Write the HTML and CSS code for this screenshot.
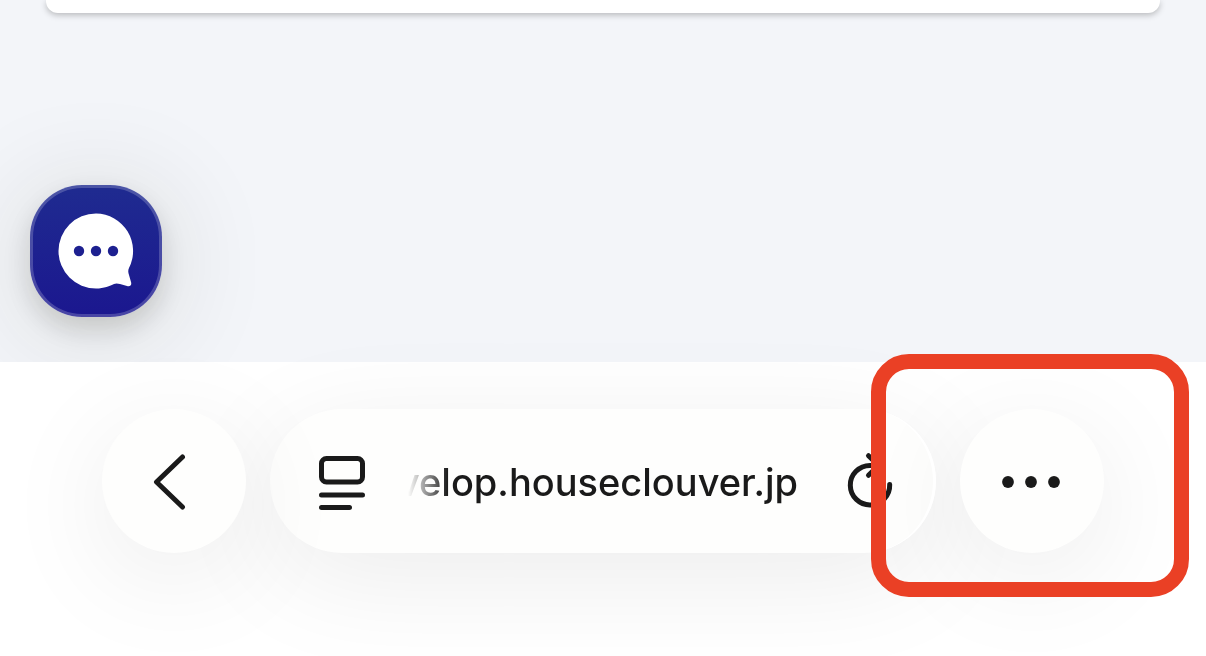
FILE: index.html
```html
<!DOCTYPE html>
<html lang="ja">
<head>
<meta charset="UTF-8">
<meta name="viewport" content="width=device-width, initial-scale=1.0">
<title>develop.houseclouver.jp</title>
<link rel="stylesheet" href="styles.css">
</head>
<body>
<main class="page">
    <div class="card"></div>
    <button class="chat-btn" type="button" aria-label="Chat">
        <svg width="76" height="76" viewBox="0 0 76 76">
            <path fill="#fff" d="M38 0.500A37.500 37.500 0 1 0 38 75.500C46 75.500 52 73 56 71C58 70 60 70.500 62 71L69 73C72 74 74 72 73 69L71 62C70 59 70 57 71 55A37.500 37.500 0 0 0 38 0.500Z"/>
            <circle cx="21" cy="38" r="5.200" fill="#1d2090"/>
            <circle cx="38" cy="38" r="5.200" fill="#1d2090"/>
            <circle cx="55" cy="38" r="5.200" fill="#1d2090"/>
        </svg>
    </button>
</main>
<nav class="toolbar">
    <button class="round-btn" type="button" aria-label="Back">
        <svg width="144" height="144" viewBox="0 0 144 144">
            <path class="stroke" d="M80.500 48L54.500 73L80.500 98"/>
        </svg>
    </button>
    <div class="address-bar">
        <button class="icon-btn" type="button" aria-label="Page menu">
            <svg width="48" height="56" viewBox="0 0 48 56">
                <rect class="stroke" x="3.500" y="3.500" width="41" height="23.500" rx="5"/>
                <path class="stroke" d="M3.500 40H44.500M3.500 52.500H31.500"/>
            </svg>
        </button>
        <button class="address" type="button"><span>develop.houseclouver.jp</span></button>
        <button class="icon-btn" type="button" aria-label="Reload">
            <svg width="48" height="56" viewBox="0 0 48 56">
                <path class="stroke" d="M22.500 0.700L32.500 10.500L22.500 20.300M29 10.500H24A19.700 19.700 0 1 0 43.700 29.500"/>
            </svg>
        </button>
    </div>
    <div class="more">
        <button class="round-btn" type="button" aria-label="More">
            <svg width="144" height="144" viewBox="0 0 144 144">
                <circle cx="48" cy="73" r="5.900" fill="#1a1a1a"/>
                <circle cx="71" cy="73" r="5.900" fill="#1a1a1a"/>
                <circle cx="94" cy="73" r="5.900" fill="#1a1a1a"/>
            </svg>
        </button>
        <div class="highlight"></div>
    </div>
</nav>
</body>
</html>
```
FILE: styles.css
```css
* {
    padding: 0;
    margin: 0;
    box-sizing: border-box;
}
body {
    display: flex;
    flex-direction: column;
    min-height: 100vh;
    background: #fff;
    color: #1a1a1a;
    font-family: Inter, sans-serif;
    overflow: hidden;
}
button {
    display: block;
    border: none;
    background: none;
    color: inherit;
    font: inherit;
    cursor: pointer;
}
svg {
    display: block;
    overflow: visible;
}
.stroke {
    fill: none;
    stroke: #1a1a1a;
    stroke-width: 5;
    stroke-linecap: round;
    stroke-linejoin: round;
}
.page {
    flex: 1;
    display: flex;
    flex-direction: column;
    justify-content: space-between;
    align-items: flex-start;
    padding-bottom: 45px;
    background: #f3f5f9;
    overflow: hidden;
}
.card {
    align-self: stretch;
    height: 13px;
    margin: 0 46px;
    background: #fff;
    border-radius: 0 0 12px 12px;
    box-shadow: 0 2px 6px rgba(0, 0, 0, 0.25);
}
.chat-btn {
    display: flex;
    justify-content: center;
    align-items: center;
    width: 132px;
    height: 132px;
    margin-left: 30px;
    border: 3px solid rgba(255, 255, 255, 0.2);
    border-radius: 52px;
    background: linear-gradient(#1f2b90, #1b178f) border-box;
    box-shadow: 0 12px 24px rgba(20, 20, 0, 0.14), 0 12px 112px rgba(40, 40, 0, 0.16);
}
.toolbar {
    display: flex;
    gap: 24px;
    padding: 47px 102px 103px;
}
.round-btn,
.address-bar {
    height: 144px;
    border-radius: 72px;
    background: #fefefd;
    box-shadow: 0 24px 112px rgba(0, 0, 0, 0.08);
}
.round-btn {
    width: 144px;
}
/* keeps the back button clear of the address bar's shadow */
.toolbar > .round-btn {
    position: relative;
}
.address-bar {
    position: relative;
    flex: 1;
    min-width: 0;
    display: flex;
    align-items: center;
    padding: 4px 42px 0 48px;
}
.toolbar > .round-btn {
    z-index: 1;
}
/* bright glass edge on the right side */
.address-bar::after {
    content: "";
    position: absolute;
    inset: 0;
    z-index: 1;
    border-right: 3px solid #fff;
    border-radius: 72px;
    pointer-events: none;
}
.address {
    flex: 1;
    min-width: 0;
    display: flex;
    justify-content: flex-end;
    margin: 0 48px 0 42px;
    padding-bottom: 2px;
    overflow: hidden;
    font-size: 38px;
    font-weight: 500;
    line-height: 56px;
    white-space: nowrap;
    -webkit-mask-image: linear-gradient(to right, transparent, #000 40px);
    mask-image: linear-gradient(to right, transparent, #000 40px);
}
.more {
    position: relative;
}
.highlight {
    position: absolute;
    inset: -55px -85px -44px -89px;
    z-index: 2;
    border: 15px solid #ea4025;
    border-radius: 38px;
    pointer-events: none;
}
```
